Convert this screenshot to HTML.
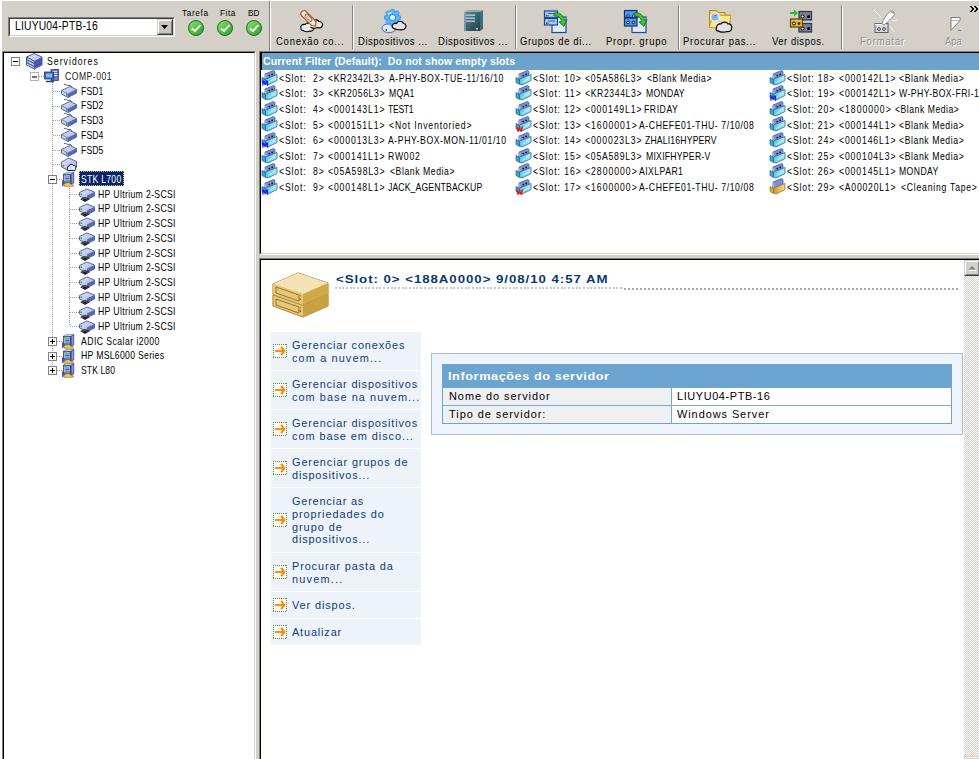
<!DOCTYPE html>
<html><head><meta charset="utf-8">
<style>
*{box-sizing:border-box}
html,body{margin:0;padding:0}
body{width:979px;height:759px;overflow:hidden;position:relative;background:#d4d0c8;font-family:"Liberation Sans",sans-serif;color:#000}
.a{position:absolute}
.t{position:absolute;white-space:nowrap;line-height:1}
.sep{position:absolute;width:2px;border-left:1px solid #808080;border-right:1px solid #fff}
svg{position:absolute;overflow:visible}
.pm{position:absolute;width:9px;height:9px;border:1px solid #808080;background:#fff}
.pm::before{content:"";position:absolute;left:1px;top:3px;width:5px;height:1px;background:#000}
.pmd::before{background:#707070;height:2px;top:3px}
.pl::after{content:"";position:absolute;left:3px;top:1px;width:1px;height:5px;background:#000}
.vl{position:absolute;width:1px;background:repeating-linear-gradient(to bottom,#a0a0a0 0 1px,transparent 1px 2px)}
.hl{position:absolute;height:1px;background:repeating-linear-gradient(to right,#a0a0a0 0 1px,transparent 1px 2px)}
.task{position:absolute;left:271px;width:150px;background:#eef3fa}
.tbox{position:absolute;left:273px;width:14px;height:14px;background-color:#fff;background:
 repeating-linear-gradient(to right,#5c8a2c 0 1px,transparent 1px 2px) 0 0/100% 1px no-repeat,
 repeating-linear-gradient(to right,#5c8a2c 0 1px,transparent 1px 2px) 0 13px/100% 1px no-repeat,
 repeating-linear-gradient(to bottom,#5c8a2c 0 1px,transparent 1px 2px) 0 0/1px 100% no-repeat,
 repeating-linear-gradient(to bottom,#5c8a2c 0 1px,transparent 1px 2px) 13px 0/1px 100% no-repeat,#fff}
</style></head>
<body>
<!-- window white edges -->
<div class="a" style="left:0;top:0;width:979px;height:1px;background:#fff"></div>
<div class="a" style="left:0;top:0;width:2px;height:759px;background:#fff"></div>

<!-- combobox -->
<div class="a" style="left:8px;top:17px;width:167px;height:20px;border-top:1px solid #808080;border-left:1px solid #808080;border-right:1px solid #fff;border-bottom:1px solid #fff">
  <div class="a" style="left:0;top:0;right:0;bottom:0;border-top:1px solid #404040;border-left:1px solid #404040;border-right:1px solid #d4d0c8;border-bottom:1px solid #d4d0c8;background:#fff"></div>
</div>
<div class="a" style="left:157px;top:19px;width:16px;height:16px;background:#c8c6c2;border-top:1px solid #d4d0c8;border-left:1px solid #d4d0c8;border-right:1px solid #404040;border-bottom:1px solid #404040">
  <div class="a" style="left:0;top:0;right:0;bottom:0;border-top:1px solid #fff;border-left:1px solid #fff;border-right:1px solid #808080;border-bottom:1px solid #808080"></div>
</div>
<svg style="left:161px;top:25px" width="8" height="5"><path d="M0 0H7L3.5 4Z" fill="#000"/></svg>

<!-- separators -->
<div class="sep" style="left:269px;top:1px;height:50px"></div>
<div class="sep" style="left:352px;top:5px;height:44px"></div>
<div class="sep" style="left:515px;top:5px;height:44px"></div>
<div class="sep" style="left:678px;top:5px;height:44px"></div>
<div class="sep" style="left:841px;top:5px;height:44px"></div>
<!-- chevron -->
<svg style="left:970px;top:6px" width="9" height="6"><path d="M0 0L3 3L0 6M1 0L4 3L1 6M4 0L7 3L4 6M5 0L8 3L5 6" stroke="#000" stroke-width="1" fill="none"/></svg>

<!-- tree panel -->
<div class="a" style="left:2px;top:51px;width:254px;height:720px;border-top:1px solid #808080;border-left:1px solid #808080;border-right:1px solid #fff;background:#fff">
  <div class="a" style="left:0;top:0;right:0;bottom:0;border-top:1px solid #000;border-left:1px solid #000;border-right:1px solid #d4d0c8"></div>
</div>
<!-- list panel -->
<div class="a" style="left:259px;top:51px;width:740px;height:204px;border-top:1px solid #808080;border-left:1px solid #808080;border-bottom:1px solid #fff;background:#fff">
  <div class="a" style="left:0;top:0;right:0;bottom:0;border-top:1px solid #000;border-left:1px solid #000;border-bottom:1px solid #d4d0c8"></div>
</div>
<div class="a" style="left:261px;top:53px;width:718px;height:17px;background:#6ca3ca;border-left:1px solid #000"></div>
<!-- detail panel -->
<div class="a" style="left:259px;top:258px;width:740px;height:520px;border-top:1px solid #808080;border-left:1px solid #808080;background:#fff">
  <div class="a" style="left:0;top:0;right:0;bottom:0;border-top:1px solid #000;border-left:1px solid #000"></div>
</div>
<!-- scrollbar -->
<div class="a" style="left:964px;top:260px;width:15px;height:499px;background:repeating-conic-gradient(#d4d0c8 0 25%,#fff 0 50%) 0 0/2px 2px"></div>
<div class="a" style="left:964px;top:260px;width:16px;height:16px;background:#d4d0c8;border-top:1px solid #d4d0c8;border-left:1px solid #d4d0c8;border-right:1px solid #404040;border-bottom:1px solid #404040">
  <div class="a" style="left:0;top:0;right:0;bottom:0;border-top:1px solid #fff;border-left:1px solid #fff;border-right:1px solid #808080;border-bottom:1px solid #808080"></div>
</div>
<svg style="left:968px;top:265px" width="9" height="6"><path d="M0.5 4.5H7.5L4 1Z" fill="#808080"/><path d="M1 5.5H8" stroke="#fff"/></svg>
<div class="a" style="left:964px;top:756px;width:16px;height:16px;background:#d4d0c8;border-top:1px solid #d4d0c8;border-left:1px solid #d4d0c8">
  <div class="a" style="left:0;top:0;right:0;bottom:0;border-top:1px solid #fff;border-left:1px solid #fff"></div>
</div>

<!-- tree selection -->
<div class="a" style="left:79px;top:171px;width:45px;height:15px;background:#0a246a;outline:1px dotted #d0c070;outline-offset:-1px"></div>

<!-- detail title dotted line -->
<div class="a" style="left:335px;top:287px;width:287px;height:2px;background:repeating-linear-gradient(to right,#c8c8c8 0 2px,transparent 2px 3.7px)"></div>
<div class="a" style="left:624px;top:288px;width:335px;height:2px;background:repeating-linear-gradient(to right,#a8a8a8 0 2px,transparent 2px 4px)"></div>

<!-- tasks -->
<div class="task" style="top:332px;height:38px"></div>
<div class="task" style="top:371px;height:38px"></div>
<div class="task" style="top:410px;height:38px"></div>
<div class="task" style="top:449px;height:38px"></div>
<div class="task" style="top:488px;height:64px"></div>
<div class="task" style="top:553px;height:38px"></div>
<div class="task" style="top:592px;height:26px"></div>
<div class="task" style="top:619px;height:26px"></div>

<!-- info box -->
<div class="a" style="left:431px;top:353px;width:532px;height:82px;border:1px solid #a8bccc;background:#eef4fb"></div>
<div class="a" style="left:442px;top:364px;width:510px;height:60px;border:1px solid #6fa2cf;background:#fff"></div>
<div class="a" style="left:443px;top:365px;width:508px;height:23px;background:#6aa4cf"></div>
<div class="a" style="left:443px;top:388px;width:228px;height:35px;background:#eef0f1"></div>
<div class="a" style="left:443px;top:405px;width:508px;height:1px;background:#7aaad4"></div>
<div class="a" style="left:671px;top:388px;width:1px;height:35px;background:#7aaad4"></div>


<svg width="0" height="0" style="position:absolute;left:0;top:0">
<defs>
 <linearGradient id="gBack" x1="0" y1="0" x2="1" y2="1"><stop offset="0" stop-color="#a8b4ec"/><stop offset="1" stop-color="#3c4ca4"/></linearGradient>
 <linearGradient id="gCyan" x1="0" y1="0" x2="1" y2="0"><stop offset="0" stop-color="#5cc4e4"/><stop offset="1" stop-color="#b4ecfc"/></linearGradient>
 <linearGradient id="gGold" x1="0" y1="0" x2="1" y2="0"><stop offset="0" stop-color="#c89a30"/><stop offset="1" stop-color="#f8dc88"/></linearGradient>
 <linearGradient id="gLav" x1="0" y1="0" x2="1" y2="1"><stop offset="0" stop-color="#e4e8fa"/><stop offset="1" stop-color="#9ca8dc"/></linearGradient>
 <linearGradient id="gGreen" x1="0" y1="0" x2="1" y2="1"><stop offset="0" stop-color="#8ee470"/><stop offset="1" stop-color="#2c9a30"/></linearGradient>
 <linearGradient id="gTan" x1="0" y1="0" x2="1" y2="1"><stop offset="0" stop-color="#f4e2a8"/><stop offset="1" stop-color="#c8a050"/></linearGradient>
 <linearGradient id="gTeal" x1="0" y1="0" x2="1" y2="1"><stop offset="0" stop-color="#5f8c9c"/><stop offset="1" stop-color="#1c3e4a"/></linearGradient>

 <g id="tape">
  <path d="M0 7.5L3.5 9V14.5L0 12.5Z" fill="#3aa6c8" stroke="#17708e" stroke-width=".7"/>
  <path d="M3 4L11.5 0.5L13 1.5V7.5L4.5 11L3 10Z" fill="#7a8ed0" stroke="#3c4a9a" stroke-width=".7"/>
  <path d="M3.8 4.6V9.8" stroke="#b8c8f4" stroke-width=".9"/>
  <circle cx="7.3" cy="5.6" r=".9" fill="#111"/><circle cx="10.2" cy="4.4" r=".9" fill="#111"/>
  <path d="M3.5 9L15 4.5V10.5L6 15L3.5 14Z" fill="url(#gCyan)" stroke="#17708e" stroke-width=".8"/>
  <path d="M6.5 12.5L13 8" stroke="#dcf6ff" stroke-width=".7"/>
 </g>
 <g id="ctape">
  <path d="M0 7.5L3.5 9V14.5L0 12.5Z" fill="#d8b048" stroke="#9a7418" stroke-width=".7"/>
  <path d="M3 3L11.5 -0.5L13 0.5V7.5L4.5 11L3 10Z" fill="#7a8ed0" stroke="#3c4a9a" stroke-width=".7"/>
  <path d="M3.8 3.6V9.8" stroke="#b8c8f4" stroke-width=".9"/>
  <path d="M3.5 9L15 4.5V10.5L6 15L3.5 14Z" fill="url(#gGold)" stroke="#9a7418" stroke-width=".8"/>
 </g>
 <g id="disk">
  <path d="M3 1.5C5 0.5 6 3 8 2.5C9 2 10 2.5 11 4" stroke="#333" stroke-width=".8" fill="none"/>
  <path d="M0.5 7.5L9 3.5L15.5 6.5V10L7 14.5L0.5 11Z" fill="url(#gLav)" stroke="#48589c" stroke-width=".9"/>
  <path d="M0.5 7.5L7 11L15.5 6.5M7 11V14.5" stroke="#5868a8" stroke-width=".7" fill="none"/>
  <path d="M7 11L15.5 6.5V10L7 14.5Z" fill="#5868b0"/>
  <rect x="5" y="11" width="1.6" height="1.6" fill="#10b030"/>
 </g>
 <g id="drive">
  <path d="M0.5 5.5L8 2L15.5 5V9L8 12.5L0.5 9Z" fill="url(#gLav)" stroke="#48589c" stroke-width=".9"/>
  <path d="M8 8.5L15.5 5V9L8 12.5Z" fill="#5868b0"/>
  <rect x="1.5" y="6.5" width="1.5" height="1.5" fill="#10b030"/>
  <path d="M1 12L6 10L11 12L6 15Z" fill="#222"/>
  <path d="M3 12.5L6 11.2L8.5 12.5" stroke="#888" stroke-width=".6" fill="none"/>
 </g>
 <g id="srv">
  <path d="M0.5 4L8 0.5L16 4V12L8 16L0.5 12Z" fill="url(#gLav)" stroke="#3a4a98" stroke-width=".9"/>
  <path d="M8 8L16 4V12L8 16Z" fill="#5060b0"/>
  <path d="M0.5 6.5L8 10.5L16 6.5M0.5 9.5L8 13.5L16 9.5M0.5 4L8 8" stroke="#3a4a98" stroke-width="1" fill="none"/>
  <rect x="1.2" y="5" width="1.5" height="1.5" fill="#20d040"/><rect x="1.2" y="8.5" width="1.5" height="1.5" fill="#20d040"/>
 </g>
 <g id="comp">
  <rect x="7" y="0.5" width="7.5" height="11" fill="#6878b8" stroke="#303c78" stroke-width=".8"/>
  <path d="M8.5 2.5H13M8.5 4.5H13M8.5 6.5H13" stroke="#d8e0f8" stroke-width="1"/>
  <rect x="0.5" y="3" width="9" height="7" fill="#4a5aa8" stroke="#303c78" stroke-width=".8"/>
  <rect x="2" y="4.5" width="6" height="4" fill="#58d0f0"/>
  <path d="M2 12.5H10" stroke="#303c78" stroke-width="1.5"/>
 </g>
 <g id="lib">
  <path d="M1.5 2.5L4.5 0.5H13L10 2.5Z" fill="#dce4f8" stroke="#5a6aa8" stroke-width=".6"/>
  <rect x="1.5" y="2.5" width="8.5" height="11" fill="#4c5ca8" stroke="#2c3a80" stroke-width=".7"/>
  <path d="M10 2.5L13 0.5V12L10 13.5Z" fill="#6c7cbc" stroke="#2c3a80" stroke-width=".7"/>
  <path d="M11.5 2.5V11" stroke="#9aa8d8" stroke-width=".8"/>
  <rect x="2.5" y="3.5" width="6" height="6.5" fill="#c4d2ee"/>
  <path d="M3.5 5.5H8M3.5 7.2H8M3.5 8.9H8" stroke="#2a3a7a" stroke-width=".8"/>
  <rect x="2.6" y="3" width="2.6" height="1.3" fill="#30e040"/>
  <rect x="2.5" y="10" width="6" height="1.2" fill="#3aa0b8"/>
  <path d="M0.8 9V15.5" stroke="#2040c0" stroke-width="1.3"/>
  <path d="M2 15.5C2 13 4 11.5 6.5 12L8 11.3L9 13.2L12.5 14.2V15.8H2Z" fill="#f2c458" stroke="#a87010" stroke-width=".7"/>
 </g>
 <g id="cdev">
  <path d="M0.5 6L8 2L15.5 5.5V11L8 15L0.5 11Z" fill="url(#gLav)" stroke="#48589c" stroke-width=".9"/>
  <rect x="1.5" y="9" width="1.5" height="1.5" fill="#10b030"/>
  <path d="M7 14.5C6 14.5 6 10 8 10C8.5 8 12 8 12.5 9.5C14.5 9 15.5 11 14.5 12.5C15.5 14.5 13 15.5 12 14.5Z" fill="#c8eefc" stroke="#111" stroke-width="1"/>
 </g>
 <g id="check">
  <circle cx="8" cy="8" r="7.5" fill="url(#gGreen)" stroke="#1a6e1a" stroke-width="1"/>
  <path d="M4 8.5L7 11L12.5 5" stroke="#fff" stroke-width="1.8" fill="none"/>
 </g>
 <g id="arrow">
  <path d="M2 7H10" stroke="#ff8a00" stroke-width="1.9"/>
  <path d="M8.2 2.8L11.2 7L8.2 11.2" stroke="#ff8a00" stroke-width="2.2" fill="none" stroke-linejoin="miter"/>
 </g>
</defs></svg>

<svg style="left:188px;top:20px" width="16" height="16"><use href="#check"/></svg>
<svg style="left:217px;top:20px" width="16" height="16"><use href="#check"/></svg>
<svg style="left:246px;top:20px" width="16" height="16"><use href="#check"/></svg>
<div class="vl" style="left:34px;top:67px;height:4px"></div>
<div class="vl" style="left:52px;top:82px;height:288px"></div>
<div class="hl" style="left:53px;top:91px;width:9px"></div>
<div class="hl" style="left:53px;top:106px;width:9px"></div>
<div class="hl" style="left:53px;top:120px;width:9px"></div>
<div class="hl" style="left:53px;top:135px;width:9px"></div>
<div class="hl" style="left:53px;top:150px;width:9px"></div>
<div class="hl" style="left:53px;top:164px;width:9px"></div>
<div class="hl" style="left:57px;top:179px;width:5px"></div>
<div class="hl" style="left:57px;top:341px;width:5px"></div>
<div class="hl" style="left:57px;top:356px;width:5px"></div>
<div class="hl" style="left:57px;top:370px;width:5px"></div>
<div class="vl" style="left:69px;top:186px;height:140px"></div>
<div class="hl" style="left:70px;top:194px;width:9px"></div>
<div class="hl" style="left:70px;top:209px;width:9px"></div>
<div class="hl" style="left:70px;top:223px;width:9px"></div>
<div class="hl" style="left:70px;top:238px;width:9px"></div>
<div class="hl" style="left:70px;top:253px;width:9px"></div>
<div class="hl" style="left:70px;top:267px;width:9px"></div>
<div class="hl" style="left:70px;top:282px;width:9px"></div>
<div class="hl" style="left:70px;top:297px;width:9px"></div>
<div class="hl" style="left:70px;top:312px;width:9px"></div>
<div class="hl" style="left:70px;top:326px;width:9px"></div>
<div class="hl" style="left:39px;top:76px;width:5px"></div>
<div class="pm" style="left:11px;top:57px"></div>
<div class="pm pmd" style="left:30px;top:72px;border-color:#b0b0b0"></div>
<div class="pm" style="left:48px;top:175px"></div>
<div class="pm pl" style="left:48px;top:337px"></div>
<div class="pm pl" style="left:48px;top:352px"></div>
<div class="pm pl" style="left:48px;top:366px"></div>
<svg style="left:26px;top:53px" width="16" height="16"><use href="#srv"/></svg>
<svg style="left:44px;top:69px" width="16" height="16"><use href="#comp"/></svg>
<svg style="left:61px;top:83px" width="16" height="16"><use href="#disk"/></svg>
<svg style="left:61px;top:98px" width="16" height="16"><use href="#disk"/></svg>
<svg style="left:61px;top:112px" width="16" height="16"><use href="#disk"/></svg>
<svg style="left:61px;top:127px" width="16" height="16"><use href="#disk"/></svg>
<svg style="left:61px;top:142px" width="16" height="16"><use href="#disk"/></svg>
<svg style="left:61px;top:156px" width="16" height="16"><use href="#cdev"/></svg>
<svg style="left:62px;top:171.5px" width="14.5" height="14.5" viewBox="0 0 16 16"><use href="#lib"/></svg>
<svg style="left:79px;top:187px" width="16" height="16"><use href="#drive"/></svg>
<svg style="left:79px;top:202px" width="16" height="16"><use href="#drive"/></svg>
<svg style="left:79px;top:216px" width="16" height="16"><use href="#drive"/></svg>
<svg style="left:79px;top:231px" width="16" height="16"><use href="#drive"/></svg>
<svg style="left:79px;top:246px" width="16" height="16"><use href="#drive"/></svg>
<svg style="left:79px;top:260px" width="16" height="16"><use href="#drive"/></svg>
<svg style="left:79px;top:275px" width="16" height="16"><use href="#drive"/></svg>
<svg style="left:79px;top:290px" width="16" height="16"><use href="#drive"/></svg>
<svg style="left:79px;top:305px" width="16" height="16"><use href="#drive"/></svg>
<svg style="left:79px;top:319px" width="16" height="16"><use href="#drive"/></svg>
<svg style="left:62px;top:333.5px" width="14.5" height="14.5" viewBox="0 0 16 16"><use href="#lib"/></svg>
<svg style="left:62px;top:348.5px" width="14.5" height="14.5" viewBox="0 0 16 16"><use href="#lib"/></svg>
<svg style="left:62px;top:362.5px" width="14.5" height="14.5" viewBox="0 0 16 16"><use href="#lib"/></svg>
<svg style="left:262px;top:70px" width="16" height="16"><use href="#tape"/><path d="M0.3 15.8V10.6H2.1L3.2 13L4.3 10.6H6.1V15.8H4.9V12.8L3.8 14.8H2.6L1.5 12.8V15.8Z" fill="#1a1aff"/></svg>
<svg style="left:516px;top:70px" width="16" height="16"><use href="#tape"/></svg>
<svg style="left:770px;top:70px" width="16" height="16"><use href="#tape"/></svg>
<svg style="left:262px;top:85px" width="16" height="16"><use href="#tape"/></svg>
<svg style="left:516px;top:85px" width="16" height="16"><use href="#tape"/></svg>
<svg style="left:770px;top:85px" width="16" height="16"><use href="#tape"/><path d="M0.3 15.8V10.6H2.1L3.2 13L4.3 10.6H6.1V15.8H4.9V12.8L3.8 14.8H2.6L1.5 12.8V15.8Z" fill="#1a1aff"/></svg>
<svg style="left:262px;top:101px" width="16" height="16"><use href="#tape"/></svg>
<svg style="left:516px;top:101px" width="16" height="16"><use href="#tape"/></svg>
<svg style="left:770px;top:101px" width="16" height="16"><use href="#tape"/></svg>
<svg style="left:262px;top:116px" width="16" height="16"><use href="#tape"/></svg>
<svg style="left:516px;top:116px" width="16" height="16"><use href="#tape"/><path d="M0 10.6H1.6L2.2 13.4L3.1 10.6H4.1L5 13.4L5.6 10.6H7.2L5.8 15.8H4.3L3.6 13.2L2.9 15.8H1.4Z" fill="#e01818"/></svg>
<svg style="left:770px;top:116px" width="16" height="16"><use href="#tape"/></svg>
<svg style="left:262px;top:132px" width="16" height="16"><use href="#tape"/><path d="M0.3 15.8V10.6H2.1L3.2 13L4.3 10.6H6.1V15.8H4.9V12.8L3.8 14.8H2.6L1.5 12.8V15.8Z" fill="#1a1aff"/></svg>
<svg style="left:516px;top:132px" width="16" height="16"><use href="#tape"/></svg>
<svg style="left:770px;top:132px" width="16" height="16"><use href="#tape"/></svg>
<svg style="left:262px;top:148px" width="16" height="16"><use href="#tape"/></svg>
<svg style="left:516px;top:148px" width="16" height="16"><use href="#tape"/></svg>
<svg style="left:770px;top:148px" width="16" height="16"><use href="#tape"/></svg>
<svg style="left:262px;top:163px" width="16" height="16"><use href="#tape"/></svg>
<svg style="left:516px;top:163px" width="16" height="16"><use href="#tape"/></svg>
<svg style="left:770px;top:163px" width="16" height="16"><use href="#tape"/></svg>
<svg style="left:262px;top:179px" width="16" height="16"><use href="#tape"/><path d="M0.3 15.8V10.6H2.1L3.2 13L4.3 10.6H6.1V15.8H4.9V12.8L3.8 14.8H2.6L1.5 12.8V15.8Z" fill="#1a1aff"/></svg>
<svg style="left:516px;top:179px" width="16" height="16"><use href="#tape"/><path d="M0 10.6H1.6L2.2 13.4L3.1 10.6H4.1L5 13.4L5.6 10.6H7.2L5.8 15.8H4.3L3.6 13.2L2.9 15.8H1.4Z" fill="#e01818"/></svg>
<svg style="left:770px;top:179px" width="16" height="16"><use href="#ctape"/></svg>
<div class="tbox" style="top:344px"></div>
<svg style="left:273px;top:344px" width="16" height="16"><use href="#arrow"/></svg>
<div class="tbox" style="top:383px"></div>
<svg style="left:273px;top:383px" width="16" height="16"><use href="#arrow"/></svg>
<div class="tbox" style="top:422px"></div>
<svg style="left:273px;top:422px" width="16" height="16"><use href="#arrow"/></svg>
<div class="tbox" style="top:461px"></div>
<svg style="left:273px;top:461px" width="16" height="16"><use href="#arrow"/></svg>
<div class="tbox" style="top:513px"></div>
<svg style="left:273px;top:513px" width="16" height="16"><use href="#arrow"/></svg>
<div class="tbox" style="top:565px"></div>
<svg style="left:273px;top:565px" width="16" height="16"><use href="#arrow"/></svg>
<div class="tbox" style="top:598px"></div>
<svg style="left:273px;top:598px" width="16" height="16"><use href="#arrow"/></svg>
<div class="tbox" style="top:625px"></div>
<svg style="left:273px;top:625px" width="16" height="16"><use href="#arrow"/></svg>
<svg style="left:298px;top:8px" width="28" height="26" viewBox="0 0 28 26">
 <path d="M3 20C2 18 4 16 7 16.5C8 14.5 12 14.5 13 16C15.5 15.5 16.5 18 15.5 19.5C16.5 21.5 14.5 23.5 12 23C10.5 24 6.5 24 5.5 22.5C3.5 23 2.5 21.5 3 20Z" fill="#e8e8e8" stroke="#000" stroke-width="1.1"/>
 <path d="M10 16C9.5 13.5 12 12 14.5 12.5C16 11.5 20 11.5 21 13.5C23.5 13.5 25 15.5 24.5 17.5C24 19.5 21.5 20.5 19.5 19.5C18 20.5 14 20.5 12.5 19" fill="#e8e8e8" stroke="#000" stroke-width="1.1"/>
 <path d="M3.5 3.5L7 2.5L18 13.5L17.5 18L13.5 17.5L2.5 6.5Z" fill="#fae8d8" stroke="#a85a30" stroke-width="1.2"/>
 <path d="M7.5 6.5L9 6L14 11L13.5 13.5L12 13.5L7 8.5Z" fill="#d4d0c8" stroke="#a85a30" stroke-width=".9"/>
</svg>
<svg style="left:381px;top:8px" width="28" height="26" viewBox="0 0 28 26">
 <path d="M1 20C1 17.5 4 16 8 16C12 16 15 17.5 15 20C15 23 12 24.5 8 24.5C4 24.5 1 23 1 20Z" fill="#e4e4f8" stroke="#5860b0" stroke-width="1"/>
 <rect x="4.5" y="21" width="1.5" height="2" fill="#10a030"/>
 <g transform="translate(11.5 9.5) scale(1.05)">
  <path d="M-1.5 -7.5H1.5L2 -5L4.5 -6.5L6.5 -4.5L5 -2L7.5 -1.5V1.5L5 2L6.5 4.5L4.5 6.5L2 5L1.5 7.5H-1.5L-2 5L-4.5 6.5L-6.5 4.5L-5 2L-7.5 1.5V-1.5L-5 -2L-6.5 -4.5L-4.5 -6.5L-2 -5Z" fill="#60b8f8" stroke="#2090f0" stroke-width=".8"/>
  <circle r="3" fill="#e8f4fc" stroke="#2090f0" stroke-width="1.2"/>
  <path d="M-4 -3L-1 -5" stroke="#fff" stroke-width="1"/>
 </g>
 <path d="M11 18.5C11 16 13.5 14.5 15.5 15.5C16.5 12.5 21.5 12.5 22.5 15.5C25 15.5 26 19 24 20.5C23 22.5 12.5 22.5 11 18.5Z" fill="#e4e4e4" stroke="#000" stroke-width="1.1"/>
</svg>
<svg style="left:461px;top:9px" width="26" height="24" viewBox="0 0 26 24">
 <path d="M3 3L7 1H22L19 3Z" fill="#8ab0bc"/>
 <rect x="3" y="3" width="16" height="19" fill="url(#gTeal)"/>
 <path d="M19 3L22 1V20L19 22Z" fill="#3c6c7a"/>
 <rect x="5" y="5.5" width="9" height="1.4" fill="#b8ccd0"/>
 <rect x="5" y="8.5" width="9" height="1.4" fill="#b8ccd0"/>
 <rect x="5" y="11.5" width="9" height="1.4" fill="#b8ccd0"/>
 <path d="M4 3V22" stroke="#a8c4cc" stroke-width="1"/>
 <rect x="15" y="19" width="2" height="1.5" fill="#e8f0f0"/>
</svg>
<svg style="left:543px;top:8px" width="26" height="26" viewBox="0 0 26 26">
 <rect x="9" y="9" width="14" height="15.5" fill="#e0e8f8" stroke="#1848a0" stroke-width="1.2"/>
 <rect x="1.5" y="3" width="13" height="6.5" fill="#a8c8f0" stroke="#1848a0" stroke-width="1.2"/>
 <rect x="1.5" y="10.5" width="13" height="6.5" fill="#a8c8f0" stroke="#1848a0" stroke-width="1.2"/>
 <rect x="3" y="7" width="1.5" height="1.5" fill="#f00"/><rect x="4.5" y="7" width="1.5" height="1.5" fill="#0c0"/>
 <rect x="3" y="14.5" width="1.5" height="1.5" fill="#f00"/><rect x="4.5" y="14.5" width="1.5" height="1.5" fill="#0c0"/>
 <path d="M5 5.5H12M5 13H12" stroke="#4060a0" stroke-width="1"/>
 <path d="M11 5C17 4 21 8 21.5 12.5L24 11.5L21 18.5L16 14L18.5 13.5C18 10 15.5 7.5 11 8Z" fill="#40c030" stroke="#107010" stroke-width=".8"/>
</svg>
<svg style="left:623px;top:8px" width="26" height="26" viewBox="0 0 26 26">
 <rect x="9" y="9" width="14" height="15.5" fill="#e0e8f8" stroke="#1848a0" stroke-width="1.2"/>
 <rect x="1.5" y="2.5" width="12.5" height="7" fill="#4898f0" stroke="#10307a" stroke-width="1.2"/>
 <rect x="1.5" y="10" width="12.5" height="8" fill="#4898f0" stroke="#10307a" stroke-width="1.2"/>
 <circle cx="5" cy="8" r="1.2" fill="#fff" stroke="#000" stroke-width=".8"/><circle cx="10.5" cy="8" r="1.2" fill="#fff" stroke="#000" stroke-width=".8"/>
 <circle cx="5" cy="14.5" r="1.3" fill="#fff" stroke="#000" stroke-width=".9"/><circle cx="10.5" cy="14.5" r="1.3" fill="#fff" stroke="#000" stroke-width=".9"/>
 <path d="M11 5C17 4 21 8 21.5 12.5L24 11.5L21 18.5L16 14L18.5 13.5C18 10 15.5 7.5 11 8Z" fill="#40c030" stroke="#107010" stroke-width=".8"/>
</svg>
<svg style="left:707px;top:9px" width="28" height="26" viewBox="0 0 28 26">
 <path d="M2.5 1.5H10L11.5 3.5H18V6H23.5L22.5 18.5H2.5Z" fill="#f0cc50" stroke="#b88a18" stroke-width="1"/>
 <path d="M6 6.5H24L21.5 18.5H2.5Z" fill="#f8e890" stroke="#c89a28" stroke-width=".8"/>
 <circle cx="8" cy="8" r="4.2" fill="#78b4f4" stroke="#e8ecf4" stroke-width="1.4"/>
 <path d="M10.5 7C9.5 5.5 7.5 5.5 6.5 6.5" stroke="#fff" stroke-width="1"/>
 <path d="M11 11L14.5 14" stroke="#d0d4e0" stroke-width="1.8"/>
 <path d="M9.5 19C9 16.5 11.5 14.5 14 15C15 12.5 20 12.5 21 15C23.5 14.5 25.5 17 24.5 19.5C25 21.5 22 23 20 22.5C18 23.5 13 23.5 11.5 22C9.5 22 8.5 20.5 9.5 19Z" fill="#e4e4e4" stroke="#000" stroke-width="1.2"/>
</svg>
<svg style="left:789px;top:8px" width="26" height="26" viewBox="0 0 26 26">
 <rect x="10" y="3.5" width="12.5" height="8.5" fill="#7c8288" stroke="#24385c" stroke-width="1.2"/>
 <rect x="10" y="15.5" width="12.5" height="8.5" fill="#7c8288" stroke="#24385c" stroke-width="1.2"/>
 <circle cx="13.5" cy="8.5" r="1.5" fill="#fff" stroke="#000" stroke-width="1"/><circle cx="19.5" cy="8.5" r="1.5" fill="#000"/>
 <circle cx="13.5" cy="20.5" r="1.5" fill="#fff" stroke="#000" stroke-width="1"/><circle cx="19.5" cy="20.5" r="1.5" fill="#000"/>
 <rect x="1.5" y="11" width="12" height="8" fill="#f0b830" stroke="#604010" stroke-width="1.2"/>
 <circle cx="5" cy="15.5" r="1.5" fill="#fff" stroke="#000" stroke-width="1"/><circle cx="10" cy="15.5" r="1.5" fill="#333"/>
 <path d="M1 4H5V1.5L9 5L5 8.5V6H1Z" fill="#20c030"/>
</svg>
<svg style="left:871px;top:8px" width="26" height="26" viewBox="0 0 26 26">
 <path d="M3 2L11 10M21 13L27 12M19 18L23 24" stroke="#f4f4f4" stroke-width="1"/>
 <rect x="4" y="15.5" width="13" height="9" fill="#d8d8d8" stroke="#606060" stroke-width="1"/>
 <path d="M4 16.5H12" stroke="#fff" stroke-width="1.2"/>
 <circle cx="8" cy="21" r="1.4" fill="#fff" stroke="#404040" stroke-width="1"/><circle cx="13" cy="21" r="1.4" fill="#fff" stroke="#404040" stroke-width="1"/>
 <path d="M11 16C12 12 15 7 19 3.5C21 2 24 4 23.5 6.5C21 10 17 14 13 17Z" fill="#f8f8f8" stroke="#909090" stroke-width="1"/>
 <path d="M19 3.5C21 2 24 4 23.5 6.5L21 5Z" fill="#a0a0a0"/>
</svg>
<svg style="left:950px;top:16px" width="13" height="16" viewBox="0 0 13 16">
 <path d="M1 1.5H10V4.5H1Z" fill="#fff" stroke="#808080" stroke-width="1"/>
 <path d="M1 4.5V14.5L10 4.5" fill="#f4f4f4" stroke="#808080" stroke-width="1"/>
 <path d="M8 14.5H11" stroke="#808080" stroke-width="1"/>
</svg>


<svg style="left:272px;top:272px" width="58" height="46" viewBox="0 0 58 46">
 <path d="M1 12L26 1L56 11V34L31 45L1 34Z" fill="#dcc078" stroke="#b89040" stroke-width=".8"/>
 <path d="M1 12L26 1L56 11V22L31 33L1 22Z" fill="url(#gTan)" stroke="#b89040" stroke-width=".8"/>
 <path d="M1 12L31 22L56 11" fill="none" stroke="#c8a050" stroke-width=".8"/>
 <path d="M31 22L56 11V22L31 33Z" fill="#d0a848"/>
 <path d="M1 12L26 1L56 11L31 22Z" fill="#f2e2b4"/>
 <path d="M1 12V22L31 33V22Z" fill="#e4c878"/>
 <path d="M4 15L27 23V29L4 21Z" fill="none" stroke="#9a7428" stroke-width="1"/>
 <rect x="27.5" y="23" width="1.5" height="1.5" fill="#30d030"/><rect x="27.5" y="26.5" width="1.5" height="1.5" fill="#e03030"/>
 <path d="M1 23L31 33.5L56 22.5V34L31 45L1 34Z" fill="#e4c878" stroke="#a88838" stroke-width=".8"/>
 <path d="M31 34L56 23V34L31 45Z" fill="#caa040"/>
 <path d="M4 27L27 35V41L4 33Z" fill="none" stroke="#9a7428" stroke-width="1"/>
 <rect x="27.5" y="35" width="1.5" height="1.5" fill="#30d030"/><rect x="27.5" y="38.5" width="1.5" height="1.5" fill="#e03030"/>
</svg>

<span class="t" id="t0" style="left:14.80px;top:19.84px;font-size:12px;font-weight:400;color:#000;letter-spacing:0.223px;transform:scaleX(0.860);transform-origin:0 0;">LIUYU04-PTB-16</span>
<span class="t" id="t1" style="left:182.00px;top:7.96px;font-size:9.5px;font-weight:400;color:#000;letter-spacing:0.765px;transform:scaleX(0.860);transform-origin:0 0;">Tarefa</span>
<span class="t" id="t2" style="left:219.60px;top:7.96px;font-size:9.5px;font-weight:400;color:#000;letter-spacing:0.688px;transform:scaleX(0.860);transform-origin:0 0;">Fita</span>
<span class="t" id="t3" style="left:247.50px;top:7.96px;font-size:9.5px;font-weight:400;color:#000;letter-spacing:0.169px;transform:scaleX(0.860);transform-origin:0 0;">BD</span>
<span class="t" id="t4" style="left:276.00px;top:36.19px;font-size:11px;font-weight:400;color:#000;letter-spacing:0.894px;transform:scaleX(0.860);transform-origin:0 0;">Conexão co...</span>
<span class="t" id="t5" style="left:357.80px;top:36.19px;font-size:11px;font-weight:400;color:#000;letter-spacing:0.636px;transform:scaleX(0.860);transform-origin:0 0;">Dispositivos ...</span>
<span class="t" id="t6" style="left:437.70px;top:36.19px;font-size:11px;font-weight:400;color:#000;letter-spacing:0.644px;transform:scaleX(0.860);transform-origin:0 0;">Dispositivos ...</span>
<span class="t" id="t7" style="left:519.50px;top:36.19px;font-size:11px;font-weight:400;color:#000;letter-spacing:0.760px;transform:scaleX(0.860);transform-origin:0 0;">Grupos de di...</span>
<span class="t" id="t8" style="left:605.50px;top:36.19px;font-size:11px;font-weight:400;color:#000;letter-spacing:0.891px;transform:scaleX(0.860);transform-origin:0 0;">Propr. grupo</span>
<span class="t" id="t9" style="left:682.50px;top:36.19px;font-size:11px;font-weight:400;color:#000;letter-spacing:0.869px;transform:scaleX(0.860);transform-origin:0 0;">Procurar pas...</span>
<span class="t" id="t10" style="left:772.40px;top:36.19px;font-size:11px;font-weight:400;color:#000;letter-spacing:0.616px;transform:scaleX(0.860);transform-origin:0 0;">Ver dispos.</span>
<span class="t" id="t11" style="left:46.50px;top:56.98px;font-size:10.3px;font-weight:400;color:#000;letter-spacing:1.238px;transform:scaleX(0.840);transform-origin:0 0;">Servidores</span>
<span class="t" id="t12" style="left:64.50px;top:71.99px;font-size:10.3px;font-weight:400;color:#222;letter-spacing:0.568px;transform:scaleX(0.840);transform-origin:0 0;">COMP-001</span>
<span class="t" id="t13" style="left:80.70px;top:86.70px;font-size:10.3px;font-weight:400;color:#000;letter-spacing:0.113px;transform:scaleX(0.840);transform-origin:0 0;">FSD1</span>
<span class="t" id="t14" style="left:80.70px;top:101.41px;font-size:10.3px;font-weight:400;color:#000;letter-spacing:0.113px;transform:scaleX(0.840);transform-origin:0 0;">FSD2</span>
<span class="t" id="t15" style="left:80.70px;top:116.12px;font-size:10.3px;font-weight:400;color:#000;letter-spacing:0.113px;transform:scaleX(0.840);transform-origin:0 0;">FSD3</span>
<span class="t" id="t16" style="left:80.70px;top:130.83px;font-size:10.3px;font-weight:400;color:#000;letter-spacing:0.113px;transform:scaleX(0.840);transform-origin:0 0;">FSD4</span>
<span class="t" id="t17" style="left:80.70px;top:145.54px;font-size:10.3px;font-weight:400;color:#000;letter-spacing:0.113px;transform:scaleX(0.840);transform-origin:0 0;">FSD5</span>
<span class="t" id="t18" style="left:80.70px;top:174.96px;font-size:10.3px;font-weight:400;color:#fff;letter-spacing:0.294px;transform:scaleX(0.840);transform-origin:0 0;">STK L700</span>
<span class="t" id="t19" style="left:98.30px;top:189.67px;font-size:10.3px;font-weight:400;color:#000;letter-spacing:0.414px;transform:scaleX(0.840);transform-origin:0 0;">HP Ultrium 2-SCSI</span>
<span class="t" id="t20" style="left:98.30px;top:204.38px;font-size:10.3px;font-weight:400;color:#000;letter-spacing:0.414px;transform:scaleX(0.840);transform-origin:0 0;">HP Ultrium 2-SCSI</span>
<span class="t" id="t21" style="left:98.30px;top:219.09px;font-size:10.3px;font-weight:400;color:#000;letter-spacing:0.414px;transform:scaleX(0.840);transform-origin:0 0;">HP Ultrium 2-SCSI</span>
<span class="t" id="t22" style="left:98.30px;top:233.80px;font-size:10.3px;font-weight:400;color:#000;letter-spacing:0.414px;transform:scaleX(0.840);transform-origin:0 0;">HP Ultrium 2-SCSI</span>
<span class="t" id="t23" style="left:98.30px;top:248.51px;font-size:10.3px;font-weight:400;color:#000;letter-spacing:0.414px;transform:scaleX(0.840);transform-origin:0 0;">HP Ultrium 2-SCSI</span>
<span class="t" id="t24" style="left:98.30px;top:263.22px;font-size:10.3px;font-weight:400;color:#000;letter-spacing:0.414px;transform:scaleX(0.840);transform-origin:0 0;">HP Ultrium 2-SCSI</span>
<span class="t" id="t25" style="left:98.30px;top:277.93px;font-size:10.3px;font-weight:400;color:#000;letter-spacing:0.414px;transform:scaleX(0.840);transform-origin:0 0;">HP Ultrium 2-SCSI</span>
<span class="t" id="t26" style="left:98.30px;top:292.64px;font-size:10.3px;font-weight:400;color:#000;letter-spacing:0.414px;transform:scaleX(0.840);transform-origin:0 0;">HP Ultrium 2-SCSI</span>
<span class="t" id="t27" style="left:98.30px;top:307.35px;font-size:10.3px;font-weight:400;color:#000;letter-spacing:0.414px;transform:scaleX(0.840);transform-origin:0 0;">HP Ultrium 2-SCSI</span>
<span class="t" id="t28" style="left:98.30px;top:322.06px;font-size:10.3px;font-weight:400;color:#000;letter-spacing:0.414px;transform:scaleX(0.840);transform-origin:0 0;">HP Ultrium 2-SCSI</span>
<span class="t" id="t29" style="left:81.00px;top:336.77px;font-size:10.3px;font-weight:400;color:#000;letter-spacing:0.539px;transform:scaleX(0.840);transform-origin:0 0;">ADIC Scalar i2000</span>
<span class="t" id="t30" style="left:81.00px;top:351.48px;font-size:10.3px;font-weight:400;color:#000;letter-spacing:0.356px;transform:scaleX(0.840);transform-origin:0 0;">HP MSL6000 Series</span>
<span class="t" id="t31" style="left:81.00px;top:366.19px;font-size:10.3px;font-weight:400;color:#000;letter-spacing:0.066px;transform:scaleX(0.840);transform-origin:0 0;">STK L80</span>
<span class="t" id="t32" style="left:263.00px;top:56.41px;font-size:10.5px;font-weight:700;color:#fff;letter-spacing:0.131px;">Current Filter (Default):  Do not show empty slots</span>
<span class="t" id="t33" style="left:279.00px;top:73.88px;font-size:10.3px;font-weight:400;color:#000;letter-spacing:1.027px;transform:scaleX(0.840);transform-origin:0 0;">&lt;Slot:  2&gt;</span>
<span class="t" id="t34" style="left:327.60px;top:73.88px;font-size:10.3px;font-weight:400;color:#000;letter-spacing:0.729px;transform:scaleX(0.840);transform-origin:0 0;">&lt;KR2342L3&gt;</span>
<span class="t" id="t35" style="left:388.70px;top:73.88px;font-size:10.3px;font-weight:400;color:#000;letter-spacing:0.648px;transform:scaleX(0.840);transform-origin:0 0;">A-PHY-BOX-TUE-11/16/10</span>
<span class="t" id="t36" style="left:279.00px;top:89.42px;font-size:10.3px;font-weight:400;color:#000;letter-spacing:1.027px;transform:scaleX(0.840);transform-origin:0 0;">&lt;Slot:  3&gt;</span>
<span class="t" id="t37" style="left:327.60px;top:89.42px;font-size:10.3px;font-weight:400;color:#000;letter-spacing:0.729px;transform:scaleX(0.840);transform-origin:0 0;">&lt;KR2056L3&gt;</span>
<span class="t" id="t38" style="left:388.70px;top:89.42px;font-size:10.3px;font-weight:400;color:#000;letter-spacing:0.271px;transform:scaleX(0.840);transform-origin:0 0;">MQA1</span>
<span class="t" id="t39" style="left:279.00px;top:104.96px;font-size:10.3px;font-weight:400;color:#000;letter-spacing:1.027px;transform:scaleX(0.840);transform-origin:0 0;">&lt;Slot:  4&gt;</span>
<span class="t" id="t40" style="left:327.60px;top:104.96px;font-size:10.3px;font-weight:400;color:#000;letter-spacing:1.046px;transform:scaleX(0.840);transform-origin:0 0;">&lt;000143L1&gt;</span>
<span class="t" id="t41" style="left:388.30px;top:104.96px;font-size:10.3px;font-weight:400;color:#000;letter-spacing:-0.393px;transform:scaleX(0.840);transform-origin:0 0;">TEST1</span>
<span class="t" id="t42" style="left:279.00px;top:120.50px;font-size:10.3px;font-weight:400;color:#000;letter-spacing:1.027px;transform:scaleX(0.840);transform-origin:0 0;">&lt;Slot:  5&gt;</span>
<span class="t" id="t43" style="left:327.60px;top:120.50px;font-size:10.3px;font-weight:400;color:#000;letter-spacing:1.046px;transform:scaleX(0.840);transform-origin:0 0;">&lt;000151L1&gt;</span>
<span class="t" id="t44" style="left:389.20px;top:120.50px;font-size:10.3px;font-weight:400;color:#000;letter-spacing:1.022px;transform:scaleX(0.840);transform-origin:0 0;">&lt;Not Inventoried&gt;</span>
<span class="t" id="t45" style="left:279.00px;top:136.04px;font-size:10.3px;font-weight:400;color:#000;letter-spacing:1.027px;transform:scaleX(0.840);transform-origin:0 0;">&lt;Slot:  6&gt;</span>
<span class="t" id="t46" style="left:327.60px;top:136.04px;font-size:10.3px;font-weight:400;color:#000;letter-spacing:1.046px;transform:scaleX(0.840);transform-origin:0 0;">&lt;000013L3&gt;</span>
<span class="t" id="t47" style="left:387.80px;top:136.04px;font-size:10.3px;font-weight:400;color:#000;letter-spacing:0.699px;transform:scaleX(0.840);transform-origin:0 0;">A-PHY-BOX-MON-11/01/10</span>
<span class="t" id="t48" style="left:279.00px;top:151.58px;font-size:10.3px;font-weight:400;color:#000;letter-spacing:1.027px;transform:scaleX(0.840);transform-origin:0 0;">&lt;Slot:  7&gt;</span>
<span class="t" id="t49" style="left:327.60px;top:151.58px;font-size:10.3px;font-weight:400;color:#000;letter-spacing:1.046px;transform:scaleX(0.840);transform-origin:0 0;">&lt;000141L1&gt;</span>
<span class="t" id="t50" style="left:387.50px;top:151.58px;font-size:10.3px;font-weight:400;color:#000;letter-spacing:0.955px;transform:scaleX(0.840);transform-origin:0 0;">RW002</span>
<span class="t" id="t51" style="left:279.00px;top:167.12px;font-size:10.3px;font-weight:400;color:#000;letter-spacing:1.027px;transform:scaleX(0.840);transform-origin:0 0;">&lt;Slot:  8&gt;</span>
<span class="t" id="t52" style="left:327.60px;top:167.12px;font-size:10.3px;font-weight:400;color:#000;letter-spacing:0.920px;transform:scaleX(0.840);transform-origin:0 0;">&lt;05A598L3&gt;</span>
<span class="t" id="t53" style="left:390.00px;top:167.12px;font-size:10.3px;font-weight:400;color:#000;letter-spacing:0.674px;transform:scaleX(0.840);transform-origin:0 0;">&lt;Blank Media&gt;</span>
<span class="t" id="t54" style="left:279.00px;top:182.66px;font-size:10.3px;font-weight:400;color:#000;letter-spacing:1.027px;transform:scaleX(0.840);transform-origin:0 0;">&lt;Slot:  9&gt;</span>
<span class="t" id="t55" style="left:327.60px;top:182.66px;font-size:10.3px;font-weight:400;color:#000;letter-spacing:1.046px;transform:scaleX(0.840);transform-origin:0 0;">&lt;000148L1&gt;</span>
<span class="t" id="t56" style="left:387.80px;top:182.66px;font-size:10.3px;font-weight:400;color:#000;letter-spacing:0.151px;transform:scaleX(0.840);transform-origin:0 0;">JACK_AGENTBACKUP</span>
<span class="t" id="t57" style="left:533.30px;top:73.88px;font-size:10.3px;font-weight:400;color:#000;letter-spacing:1.093px;transform:scaleX(0.840);transform-origin:0 0;">&lt;Slot: 10&gt;</span>
<span class="t" id="t58" style="left:585.00px;top:73.88px;font-size:10.3px;font-weight:400;color:#000;letter-spacing:0.920px;transform:scaleX(0.840);transform-origin:0 0;">&lt;05A586L3&gt;</span>
<span class="t" id="t59" style="left:646.80px;top:73.88px;font-size:10.3px;font-weight:400;color:#000;letter-spacing:0.674px;transform:scaleX(0.840);transform-origin:0 0;">&lt;Blank Media&gt;</span>
<span class="t" id="t60" style="left:533.30px;top:89.42px;font-size:10.3px;font-weight:400;color:#000;letter-spacing:1.178px;transform:scaleX(0.840);transform-origin:0 0;">&lt;Slot: 11&gt;</span>
<span class="t" id="t61" style="left:585.00px;top:89.42px;font-size:10.3px;font-weight:400;color:#000;letter-spacing:0.729px;transform:scaleX(0.840);transform-origin:0 0;">&lt;KR2344L3&gt;</span>
<span class="t" id="t62" style="left:646.00px;top:89.42px;font-size:10.3px;font-weight:400;color:#000;letter-spacing:0.303px;transform:scaleX(0.840);transform-origin:0 0;">MONDAY</span>
<span class="t" id="t63" style="left:533.30px;top:104.96px;font-size:10.3px;font-weight:400;color:#000;letter-spacing:1.093px;transform:scaleX(0.840);transform-origin:0 0;">&lt;Slot: 12&gt;</span>
<span class="t" id="t64" style="left:585.00px;top:104.96px;font-size:10.3px;font-weight:400;color:#000;letter-spacing:1.046px;transform:scaleX(0.840);transform-origin:0 0;">&lt;000149L1&gt;</span>
<span class="t" id="t65" style="left:644.30px;top:104.96px;font-size:10.3px;font-weight:400;color:#000;letter-spacing:0.671px;transform:scaleX(0.840);transform-origin:0 0;">FRIDAY</span>
<span class="t" id="t66" style="left:533.30px;top:120.50px;font-size:10.3px;font-weight:400;color:#000;letter-spacing:1.093px;transform:scaleX(0.840);transform-origin:0 0;">&lt;Slot: 13&gt;</span>
<span class="t" id="t67" style="left:585.00px;top:120.50px;font-size:10.3px;font-weight:400;color:#000;letter-spacing:1.178px;transform:scaleX(0.840);transform-origin:0 0;">&lt;1600001&gt;</span>
<span class="t" id="t68" style="left:639.30px;top:120.50px;font-size:10.3px;font-weight:400;color:#000;letter-spacing:0.698px;transform:scaleX(0.840);transform-origin:0 0;">A-CHEFE01-THU- 7/10/08</span>
<span class="t" id="t69" style="left:533.30px;top:136.04px;font-size:10.3px;font-weight:400;color:#000;letter-spacing:1.093px;transform:scaleX(0.840);transform-origin:0 0;">&lt;Slot: 14&gt;</span>
<span class="t" id="t70" style="left:585.00px;top:136.04px;font-size:10.3px;font-weight:400;color:#000;letter-spacing:1.046px;transform:scaleX(0.840);transform-origin:0 0;">&lt;000023L3&gt;</span>
<span class="t" id="t71" style="left:645.20px;top:136.04px;font-size:10.3px;font-weight:400;color:#000;letter-spacing:0.203px;transform:scaleX(0.840);transform-origin:0 0;">ZHALI16HYPERV</span>
<span class="t" id="t72" style="left:533.30px;top:151.58px;font-size:10.3px;font-weight:400;color:#000;letter-spacing:1.093px;transform:scaleX(0.840);transform-origin:0 0;">&lt;Slot: 15&gt;</span>
<span class="t" id="t73" style="left:585.00px;top:151.58px;font-size:10.3px;font-weight:400;color:#000;letter-spacing:0.920px;transform:scaleX(0.840);transform-origin:0 0;">&lt;05A589L3&gt;</span>
<span class="t" id="t74" style="left:645.70px;top:151.58px;font-size:10.3px;font-weight:400;color:#000;letter-spacing:0.301px;transform:scaleX(0.840);transform-origin:0 0;">MIXIFHYPER-V</span>
<span class="t" id="t75" style="left:533.30px;top:167.12px;font-size:10.3px;font-weight:400;color:#000;letter-spacing:1.093px;transform:scaleX(0.840);transform-origin:0 0;">&lt;Slot: 16&gt;</span>
<span class="t" id="t76" style="left:585.00px;top:167.12px;font-size:10.3px;font-weight:400;color:#000;letter-spacing:1.178px;transform:scaleX(0.840);transform-origin:0 0;">&lt;2800000&gt;</span>
<span class="t" id="t77" style="left:639.30px;top:167.12px;font-size:10.3px;font-weight:400;color:#000;letter-spacing:0.542px;transform:scaleX(0.840);transform-origin:0 0;">AIXLPAR1</span>
<span class="t" id="t78" style="left:533.30px;top:182.66px;font-size:10.3px;font-weight:400;color:#000;letter-spacing:1.093px;transform:scaleX(0.840);transform-origin:0 0;">&lt;Slot: 17&gt;</span>
<span class="t" id="t79" style="left:585.00px;top:182.66px;font-size:10.3px;font-weight:400;color:#000;letter-spacing:1.178px;transform:scaleX(0.840);transform-origin:0 0;">&lt;1600000&gt;</span>
<span class="t" id="t80" style="left:639.30px;top:182.66px;font-size:10.3px;font-weight:400;color:#000;letter-spacing:0.698px;transform:scaleX(0.840);transform-origin:0 0;">A-CHEFE01-THU- 7/10/08</span>
<span class="t" id="t81" style="left:787.20px;top:73.88px;font-size:10.3px;font-weight:400;color:#000;letter-spacing:1.026px;transform:scaleX(0.840);transform-origin:0 0;">&lt;Slot: 18&gt;</span>
<span class="t" id="t82" style="left:839.10px;top:73.88px;font-size:10.3px;font-weight:400;color:#000;letter-spacing:1.046px;transform:scaleX(0.840);transform-origin:0 0;">&lt;000142L1&gt;</span>
<span class="t" id="t83" style="left:899.30px;top:73.88px;font-size:10.3px;font-weight:400;color:#000;letter-spacing:0.693px;transform:scaleX(0.840);transform-origin:0 0;">&lt;Blank Media&gt;</span>
<span class="t" id="t84" style="left:787.20px;top:89.42px;font-size:10.3px;font-weight:400;color:#000;letter-spacing:1.026px;transform:scaleX(0.840);transform-origin:0 0;">&lt;Slot: 19&gt;</span>
<span class="t" id="t85" style="left:839.10px;top:89.42px;font-size:10.3px;font-weight:400;color:#000;letter-spacing:1.046px;transform:scaleX(0.840);transform-origin:0 0;">&lt;000142L1&gt;</span>
<span class="t" id="t86" style="left:898.80px;top:89.42px;font-size:10.3px;font-weight:400;color:#000;letter-spacing:0.536px;transform:scaleX(0.840);transform-origin:0 0;">W-PHY-BOX-FRI-11/19/10</span>
<span class="t" id="t87" style="left:787.20px;top:104.96px;font-size:10.3px;font-weight:400;color:#000;letter-spacing:1.026px;transform:scaleX(0.840);transform-origin:0 0;">&lt;Slot: 20&gt;</span>
<span class="t" id="t88" style="left:839.10px;top:104.96px;font-size:10.3px;font-weight:400;color:#000;letter-spacing:1.178px;transform:scaleX(0.840);transform-origin:0 0;">&lt;1800000&gt;</span>
<span class="t" id="t89" style="left:895.10px;top:104.96px;font-size:10.3px;font-weight:400;color:#000;letter-spacing:0.614px;transform:scaleX(0.840);transform-origin:0 0;">&lt;Blank Media&gt;</span>
<span class="t" id="t90" style="left:787.20px;top:120.50px;font-size:10.3px;font-weight:400;color:#000;letter-spacing:1.026px;transform:scaleX(0.840);transform-origin:0 0;">&lt;Slot: 21&gt;</span>
<span class="t" id="t91" style="left:839.10px;top:120.50px;font-size:10.3px;font-weight:400;color:#000;letter-spacing:1.046px;transform:scaleX(0.840);transform-origin:0 0;">&lt;000144L1&gt;</span>
<span class="t" id="t92" style="left:899.30px;top:120.50px;font-size:10.3px;font-weight:400;color:#000;letter-spacing:0.693px;transform:scaleX(0.840);transform-origin:0 0;">&lt;Blank Media&gt;</span>
<span class="t" id="t93" style="left:787.20px;top:136.04px;font-size:10.3px;font-weight:400;color:#000;letter-spacing:1.026px;transform:scaleX(0.840);transform-origin:0 0;">&lt;Slot: 24&gt;</span>
<span class="t" id="t94" style="left:839.10px;top:136.04px;font-size:10.3px;font-weight:400;color:#000;letter-spacing:1.046px;transform:scaleX(0.840);transform-origin:0 0;">&lt;000146L1&gt;</span>
<span class="t" id="t95" style="left:899.30px;top:136.04px;font-size:10.3px;font-weight:400;color:#000;letter-spacing:0.693px;transform:scaleX(0.840);transform-origin:0 0;">&lt;Blank Media&gt;</span>
<span class="t" id="t96" style="left:787.20px;top:151.58px;font-size:10.3px;font-weight:400;color:#000;letter-spacing:1.026px;transform:scaleX(0.840);transform-origin:0 0;">&lt;Slot: 25&gt;</span>
<span class="t" id="t97" style="left:839.10px;top:151.58px;font-size:10.3px;font-weight:400;color:#000;letter-spacing:1.046px;transform:scaleX(0.840);transform-origin:0 0;">&lt;000104L3&gt;</span>
<span class="t" id="t98" style="left:899.30px;top:151.58px;font-size:10.3px;font-weight:400;color:#000;letter-spacing:0.693px;transform:scaleX(0.840);transform-origin:0 0;">&lt;Blank Media&gt;</span>
<span class="t" id="t99" style="left:787.20px;top:167.12px;font-size:10.3px;font-weight:400;color:#000;letter-spacing:1.026px;transform:scaleX(0.840);transform-origin:0 0;">&lt;Slot: 26&gt;</span>
<span class="t" id="t100" style="left:839.10px;top:167.12px;font-size:10.3px;font-weight:400;color:#000;letter-spacing:1.046px;transform:scaleX(0.840);transform-origin:0 0;">&lt;000145L1&gt;</span>
<span class="t" id="t101" style="left:898.50px;top:167.12px;font-size:10.3px;font-weight:400;color:#000;letter-spacing:0.493px;transform:scaleX(0.840);transform-origin:0 0;">MONDAY</span>
<span class="t" id="t102" style="left:787.20px;top:182.66px;font-size:10.3px;font-weight:400;color:#000;letter-spacing:1.026px;transform:scaleX(0.840);transform-origin:0 0;">&lt;Slot: 29&gt;</span>
<span class="t" id="t103" style="left:839.10px;top:182.66px;font-size:10.3px;font-weight:400;color:#000;letter-spacing:0.920px;transform:scaleX(0.840);transform-origin:0 0;">&lt;A00020L1&gt;</span>
<span class="t" id="t104" style="left:900.70px;top:182.66px;font-size:10.3px;font-weight:400;color:#000;letter-spacing:0.905px;transform:scaleX(0.840);transform-origin:0 0;">&lt;Cleaning Tape&gt;</span>
<span class="t" id="t105" style="left:335.50px;top:274.27px;font-size:11.5px;font-weight:700;color:#08386f;letter-spacing:0.840px;transform:scaleX(1.150);transform-origin:0 0;">&lt;Slot: 0&gt; &lt;188A0000&gt; 9/08/10 4:57 AM</span>
<span class="t" id="t106" style="left:291.70px;top:340.01px;font-size:10.5px;font-weight:400;color:#0c3c78;letter-spacing:0.830px;transform:scaleX(1.040);transform-origin:0 0;">Gerenciar conexões</span>
<span class="t" id="t107" style="left:291.70px;top:352.86px;font-size:10.5px;font-weight:400;color:#0c3c78;letter-spacing:1.076px;transform:scaleX(1.040);transform-origin:0 0;">com a nuvem...</span>
<span class="t" id="t108" style="left:291.70px;top:379.01px;font-size:10.5px;font-weight:400;color:#0c3c78;letter-spacing:0.809px;transform:scaleX(1.040);transform-origin:0 0;">Gerenciar dispositivos</span>
<span class="t" id="t109" style="left:291.70px;top:391.86px;font-size:10.5px;font-weight:400;color:#0c3c78;letter-spacing:1.000px;transform:scaleX(1.040);transform-origin:0 0;">com base na nuvem...</span>
<span class="t" id="t110" style="left:291.70px;top:418.01px;font-size:10.5px;font-weight:400;color:#0c3c78;letter-spacing:0.809px;transform:scaleX(1.040);transform-origin:0 0;">Gerenciar dispositivos</span>
<span class="t" id="t111" style="left:291.70px;top:430.86px;font-size:10.5px;font-weight:400;color:#0c3c78;letter-spacing:0.896px;transform:scaleX(1.040);transform-origin:0 0;">com base em disco...</span>
<span class="t" id="t112" style="left:291.70px;top:457.01px;font-size:10.5px;font-weight:400;color:#0c3c78;letter-spacing:0.857px;transform:scaleX(1.040);transform-origin:0 0;">Gerenciar grupos de</span>
<span class="t" id="t113" style="left:291.70px;top:469.86px;font-size:10.5px;font-weight:400;color:#0c3c78;letter-spacing:0.800px;transform:scaleX(1.040);transform-origin:0 0;">dispositivos...</span>
<span class="t" id="t114" style="left:291.70px;top:495.91px;font-size:10.5px;font-weight:400;color:#0c3c78;letter-spacing:0.768px;transform:scaleX(1.040);transform-origin:0 0;">Gerenciar as</span>
<span class="t" id="t115" style="left:291.70px;top:508.76px;font-size:10.5px;font-weight:400;color:#0c3c78;letter-spacing:0.884px;transform:scaleX(1.040);transform-origin:0 0;">propriedades do</span>
<span class="t" id="t116" style="left:291.70px;top:521.61px;font-size:10.5px;font-weight:400;color:#0c3c78;letter-spacing:0.919px;transform:scaleX(1.040);transform-origin:0 0;">grupo de</span>
<span class="t" id="t117" style="left:291.70px;top:534.46px;font-size:10.5px;font-weight:400;color:#0c3c78;letter-spacing:0.800px;transform:scaleX(1.040);transform-origin:0 0;">dispositivos...</span>
<span class="t" id="t118" style="left:291.70px;top:561.11px;font-size:10.5px;font-weight:400;color:#0c3c78;letter-spacing:0.841px;transform:scaleX(1.040);transform-origin:0 0;">Procurar pasta da</span>
<span class="t" id="t119" style="left:291.70px;top:573.96px;font-size:10.5px;font-weight:400;color:#0c3c78;letter-spacing:1.141px;transform:scaleX(1.040);transform-origin:0 0;">nuvem...</span>
<span class="t" id="t120" style="left:291.70px;top:600.11px;font-size:10.5px;font-weight:400;color:#0c3c78;letter-spacing:0.853px;transform:scaleX(1.040);transform-origin:0 0;">Ver dispos.</span>
<span class="t" id="t121" style="left:291.70px;top:626.71px;font-size:10.5px;font-weight:400;color:#0c3c78;letter-spacing:0.806px;transform:scaleX(1.040);transform-origin:0 0;">Atualizar</span>
<span class="t" id="t122" style="left:447.70px;top:371.19px;font-size:11px;font-weight:700;color:#fff;letter-spacing:0.528px;transform:scaleX(1.150);transform-origin:0 0;">Informações do servidor</span>
<span class="t" id="t123" style="left:448.60px;top:390.61px;font-size:10.5px;font-weight:400;color:#000;letter-spacing:0.930px;transform:scaleX(1.040);transform-origin:0 0;">Nome do servidor</span>
<span class="t" id="t124" style="left:448.60px;top:408.61px;font-size:10.5px;font-weight:400;color:#000;letter-spacing:0.930px;transform:scaleX(1.040);transform-origin:0 0;">Tipo de servidor:</span>
<span class="t" id="t125" style="left:677.40px;top:390.61px;font-size:10.5px;font-weight:400;color:#000;letter-spacing:0.579px;transform:scaleX(1.040);transform-origin:0 0;">LIUYU04-PTB-16</span>
<span class="t" id="t126" style="left:677.40px;top:408.61px;font-size:10.5px;font-weight:400;color:#000;letter-spacing:0.909px;transform:scaleX(1.040);transform-origin:0 0;">Windows Server</span>
<span class="t" id="t127" style="left:860.40px;top:36.19px;font-size:11px;font-weight:400;color:#8e8c88;letter-spacing:0.967px;transform:scaleX(0.860);transform-origin:0 0;text-shadow:1px 1px 0 #fff;">Formatar</span>
<span class="t" id="t128" style="left:945.00px;top:36.19px;font-size:11px;font-weight:400;color:#8e8c88;letter-spacing:0.000px;transform:scaleX(0.860);transform-origin:0 0;text-shadow:1px 1px 0 #fff;">Apa</span>
<div class="a" style="left:962px;top:12px;width:7px;height:38px;background:#d4d0c8"></div>
</body></html>
